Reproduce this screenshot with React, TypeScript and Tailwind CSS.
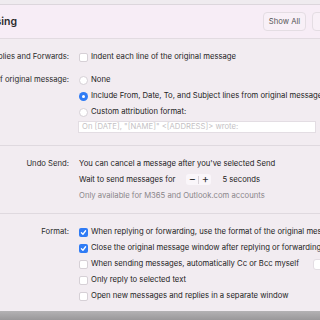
import React from 'react';

const Check: React.FC<{ on?: boolean }> = ({ on }) => (
  <div
    className={`w-[9px] h-[9px] rounded-[2px] shrink-0 flex items-center justify-center ${
      on ? 'bg-[#2f7bf5]' : 'bg-white border border-[#d6d0d6]'
    }`}
  >
    {on && (
      <svg width="7" height="7" viewBox="0 0 10 10">
        <path d="M2 5.3 L4.2 7.5 L8 2.5" stroke="white" strokeWidth="1.8" fill="none" strokeLinecap="round" strokeLinejoin="round" />
      </svg>
    )}
  </div>
);

const Radio: React.FC<{ on?: boolean }> = ({ on }) => (
  <div
    className={`w-[9px] h-[9px] rounded-full shrink-0 flex items-center justify-center ${
      on ? 'bg-[#2f7bf5]' : 'bg-white border border-[#d6d0d6]'
    }`}
  >
    {on && <div className="w-[3px] h-[3px] rounded-full bg-white" />}
  </div>
);

const Label: React.FC<{ text: string }> = ({ text }) => (
  <div className="w-[70px] shrink-0 flex justify-end pr-[1px] whitespace-nowrap text-[#2a2a2a]">{text}</div>
);

const Opt: React.FC<{ children: React.ReactNode; control?: React.ReactNode }> = ({ children, control }) => (
  <div className="flex items-center gap-[3px] h-[16px] whitespace-nowrap">
    {control}
    <span>{children}</span>
  </div>
);

export default function App() {
  return (
    <div
      className="w-[320px] h-[320px] overflow-hidden bg-[#f2ecf1] text-[7.7px] text-[#222] flex flex-col"
      style={{ fontFamily: 'Inter, "Liberation Sans", sans-serif' }}
    >
      <div className="h-[5px] bg-[#efebef] border-b border-[#dcd6dc] shrink-0" />
      <div className="h-[34px] bg-[#f7edf6] border-b border-[#e2dbe1] flex items-center shrink-0">
        <div className="ml-[-41px] text-[10.5px] font-semibold text-[#2b2b2b]">Composing</div>
        <div className="flex-1" />
        <div className="w-[43px] h-[19px] rounded-[4px] border border-[#e4dde3] bg-[#f8f0f7] flex items-center justify-center text-[#555] text-[7.7px] mr-[6px]">
          Show All
        </div>
        <div className="w-[20px] h-[19px] rounded-[4px] border border-[#e4dde3] bg-[#f8f0f7] mr-[-12px]" />
      </div>

      <div className="pt-[10px] flex flex-col">
        <div className="flex gap-[9px]">
          <div className="h-[16px] flex items-center"><Label text="Replies and Forwards:" /></div>
          <Opt control={<Check />}>Indent each line of the original message</Opt>
        </div>
        <div className="flex gap-[9px] mt-[7px]">
          <div className="h-[16px] flex items-center"><Label text="Header of original message:" /></div>
          <div className="flex flex-col">
            <Opt control={<Radio />}>None</Opt>
            <Opt control={<Radio on />}>Include From, Date, To, and Subject lines from original message</Opt>
            <Opt control={<Radio />}>Custom attribution format:</Opt>
            <div className="w-[238px] h-[12px] mt-[1px] ml-[-1px] bg-white border border-[#e3dde3] flex items-center px-[3px] text-[#c4bfc4] whitespace-nowrap">
              On [DATE], "[NAME]" &lt;[ADDRESS]&gt; wrote:
            </div>
          </div>
        </div>
      </div>

      <div className="mt-[12px] border-t border-[#dfd9df]" />

      <div className="pt-[10px] flex gap-[9px]">
        <div className="h-[16px] flex items-center"><Label text="Undo Send:" /></div>
        <div className="flex flex-col">
          <Opt>You can cancel a message after you've selected Send</Opt>
          <div className="flex items-center h-[15px] whitespace-nowrap">
            <span>Wait to send messages for</span>
            <div className="ml-[11px] flex items-center h-[11px] rounded-[3px] bg-[#faf6fa] text-[11px] leading-none text-[#333]">
              <span className="w-[12px] text-center">−</span>
              <span className="w-px h-[8px] bg-[#d8d2d8]" />
              <span className="w-[12px] text-center">+</span>
            </div>
            <span className="ml-[11px]">5 seconds</span>
          </div>
          <div className="h-[18px] flex items-center text-[#8a868a] whitespace-nowrap">
            Only available for M365 and Outlook.com accounts
          </div>
        </div>
      </div>

      <div className="mt-[8px] border-t border-[#dfd9df]" />

      <div className="pt-[10px] flex gap-[9px]">
        <div className="h-[16px] flex items-center"><Label text="Format:" /></div>
        <div className="flex flex-col">
          <Opt control={<Check on />}>When replying or forwarding, use the format of the original message</Opt>
          <Opt control={<Check on />}>Close the original message window after replying or forwarding</Opt>
          <div className="flex items-center h-[16px] whitespace-nowrap">
            <Check />
            <span className="ml-[3px]">When sending messages, automatically Cc or Bcc myself</span>
            <div className="ml-[14px] w-[30px] h-[11px] rounded-[3px] bg-white border border-[#e3dde3]" />
          </div>
          <Opt control={<Check />}>Only reply to selected text</Opt>
          <Opt control={<Check />}>Open new messages and replies in a separate window</Opt>
        </div>
      </div>

      <div className="flex-1" />
      <div className="h-[9px] shrink-0 bg-gradient-to-b from-[#b4b2b4] to-[#9a989a]" />
    </div>
  );
}
